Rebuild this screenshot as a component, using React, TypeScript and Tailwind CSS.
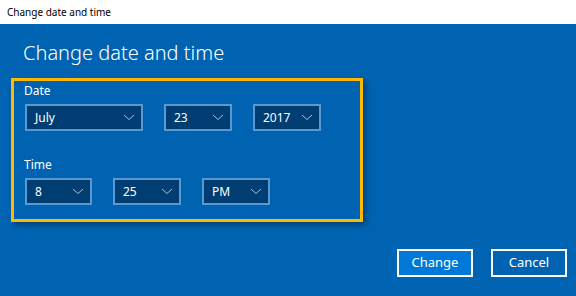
function Dropdown({ value, width }: { value: string; width: string }) {
  return (
    <div
      className={`${width} h-[27px] flex items-center justify-between border-2 border-[#5b98d2] bg-[#003d73] pl-[8px] pr-[6px] text-[12px] text-white`}
    >
      <span>{value}</span>
      <svg width="12" height="7" viewBox="0 0 12 7" fill="none" className="text-[#9cc3e8]">
        <path d="M1 1 L6 5.5 L11 1" stroke="currentColor" strokeWidth="1" />
      </svg>
    </div>
  );
}

export default function App() {
  return (
    <div
      className="w-[576px] h-[296px] flex flex-col overflow-hidden"
      style={{ fontFamily: '"Noto Sans", "Open Sans", sans-serif' }}
    >
      {/* Title bar */}
      <div className="h-[24px] bg-white flex items-center pl-[7px] text-[10px] text-black">
        Change date and time
      </div>

      {/* Content */}
      <div className="flex-1 bg-[#0063b1] flex flex-col text-white">
        <h1 className="ml-[23px] mt-[15px] text-[20px] leading-[28px] font-light">Change date and time</h1>

        <div className="ml-[11px] mt-[11px] w-[352px] h-[144px] border-[3px] border-[#ffb900] shadow-[3px_3px_6px_rgba(0,0,0,0.35)] pl-[11px] flex flex-col">
          <div className="mt-[1px] text-[12px] leading-[18px] -ml-[1px]">Date</div>
          <div className="mt-[4px] flex gap-[21px]">
            <Dropdown value="July" width="w-[118px]" />
            <Dropdown value="23" width="w-[68px]" />
            <Dropdown value="2017" width="w-[68px]" />
          </div>

          <div className="mt-[25px] text-[12px] leading-[18px] -ml-[1px]">Time</div>
          <div className="mt-[4px] flex gap-[21px]">
            <Dropdown value="8" width="w-[67px]" />
            <Dropdown value="25" width="w-[68px]" />
            <Dropdown value="PM" width="w-[68px]" />
          </div>
        </div>

        <div className="mt-auto mb-[19px] mr-[9px] flex justify-end gap-[18px]">
          <button className="w-[76px] h-[28px] border-2 border-white bg-[#0078d7] text-[13px] text-white">
            Change
          </button>
          <button className="w-[76px] h-[28px] border-2 border-white bg-[#0063b1] text-[13px] text-white">
            Cancel
          </button>
        </div>
      </div>
    </div>
  );
}
